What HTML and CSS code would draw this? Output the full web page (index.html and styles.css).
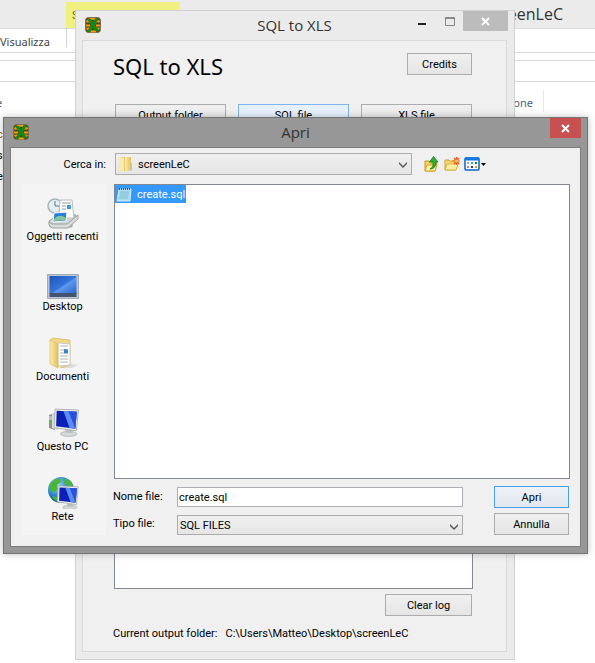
FILE: index.html
```html
<!DOCTYPE html>
<html lang="it">
<head>
<meta charset="utf-8">
<title>SQL to XLS</title>
<link rel="stylesheet" href="styles.css">
</head>
<body>
<svg class="defs" aria-hidden="true">
  <defs>
    <linearGradient id="desk" x1="0" y1="0" x2="1" y2="1"><stop offset="0" stop-color="#1f55b8"/><stop offset=".5" stop-color="#3474dc"/><stop offset=".55" stop-color="#5d98ee"/><stop offset="1" stop-color="#2863cc"/></linearGradient>
    <linearGradient id="folder" x1="0" y1="0" x2="1" y2="0"><stop offset="0" stop-color="#fbeeb0"/><stop offset="1" stop-color="#e3bf58"/></linearGradient>
    <radialGradient id="globe" cx=".35" cy=".3" r=".8"><stop offset="0" stop-color="#a8dcf8"/><stop offset=".5" stop-color="#2f86d2"/><stop offset="1" stop-color="#0c3c88"/></radialGradient>
    <symbol id="app" viewBox="0 0 16 16">
      <rect x=".5" y=".5" width="15" height="15" rx="3" fill="#5a4414" stroke="#77705c"/>
      <path d="M4 2.500q4-1.500 8 0M1.500 5q2-2 4 0M10.500 5q2-2 4 0M1 8.500h4M11 8.500h4M1.500 12q2-1 4 0M10.500 12q2-1 4 0M5 14q3 1 6 0" fill="none" stroke="#f79a0c" stroke-width="2.200"/>
      <path d="M2 2h4l2 3.500L10.500 1H14l-4 7 4.500 6H10L8 10.500 5.500 15H2l4-7z" fill="#128a16"/>
    </symbol>
    <symbol id="cross" viewBox="0 0 9 9"><path d="M1 1l7 7M8 1L1 8" stroke="#fff" stroke-width="2"/></symbol>
    <symbol id="chevron" viewBox="0 0 8 6"><path d="M0 0l4 4 4-4v2L4 6 0 2z" fill="#555"/></symbol>
    <symbol id="monitor" viewBox="0 0 24 28">
      <ellipse cx="14" cy="25" rx="8" ry="2.500" fill="#d4d7d8" stroke="#a6aaab" stroke-width=".6"/>
      <path d="M11 19h6l1 5h-7z" fill="#b9bdbe"/>
      <path d="M1 1l22.500 1-2 20L0 19z" fill="#eceeea" stroke="#a5a9a6" stroke-width=".8"/>
      <path d="M2.500 2.700l19.500 1-1.500 16.300L2 17.500z" fill="#0b20b6"/>
      <path d="M9 3l13 .7-1.500 16.300-5.500-.8z" fill="#5a8df0"/>
      <path d="M14 3.300l8 .4-1.500 16.300z" fill="#2850dc"/>
    </symbol>
  </defs>
</svg>

<div class="explorer">
  <div class="explorer-title">
    <span class="tab-tools">Strumenti</span>
    <span class="explorer-name">screenLeC</span>
  </div>
  <div class="explorer-tabs"><span>Visualizza</span></div>
  <div class="explorer-gap"></div>
  <div class="explorer-address"></div>
  <div class="explorer-columns"><span>e</span><span class="column-end">one</span></div>
  <ul class="explorer-rows"><li class="warm">c</li><li>s</li><li>e</li></ul>
</div>

<section class="main-window">
  <header class="main-bar">
    <svg class="app-icon"><use href="#app"/></svg>
    <h2>SQL to XLS</h2>
    <div class="controls">
      <button class="control" aria-label="Minimize"><svg width="9" height="9"><path d="M0 6h8v2H0z" fill="#222"/></svg></button>
      <button class="control" aria-label="Maximize"><svg width="10" height="9"><path d="M.5 1h9v7.500h-9z" fill="none" stroke="#888"/><path d="M0 1h10" stroke="#888" stroke-width="2"/></svg></button>
      <button class="control close-idle" aria-label="Close"><svg width="9" height="9"><use href="#cross"/></svg></button>
    </div>
  </header>
  <main class="main-client">
    <div class="heading-row"><h1>SQL to XLS</h1><button class="btn credits">Credits</button></div>
    <div class="steps"><button class="btn">Output folder</button><button class="btn hot">SQL file</button><button class="btn">XLS file</button></div>
    <textarea class="log" aria-label="Log" readonly></textarea>
    <button class="btn clear">Clear log</button>
    <p class="output"><span>Current output folder:</span><span>C:\Users\Matteo\Desktop\screenLeC</span></p>
  </main>
</section>

<section class="dialog" role="dialog" aria-labelledby="dialog-title">
  <header class="dialog-bar">
    <svg class="app-icon"><use href="#app"/></svg>
    <h2 id="dialog-title">Apri</h2>
    <button class="dialog-close" aria-label="Chiudi"><svg width="9" height="9"><use href="#cross"/></svg></button>
  </header>
  <form class="dialog-client">
    <div class="look-row">
      <label for="look">Cerca in:</label>
      <div class="combo with-icon">
        <select id="look"><option>screenLeC</option></select>
        <svg class="combo-icon" viewBox="0 0 14 16"><path d="M0 1h7v14H0z" fill="#e7c96a"/><path d="M0 1l5 1v14l-5-1z" fill="#f9eaa8"/><path d="M6 1h6v13l-6 2z" fill="url(#folder)"/><path d="M12 7h1v7l-2 1z" fill="#b9c9bd"/></svg>
        <svg class="arrow"><use href="#chevron"/></svg>
      </div>
      <div class="tools">
        <button type="button" aria-label="Livello superiore"><svg width="16" height="16" viewBox="0 0 16 16"><path d="M1 5h4l1 2h7l-2 8H1z" fill="#f5d768" stroke="#c79a1c"/><path d="M3 9h10l-2 6H1z" fill="#fdf0a0" stroke="#d1a52a"/><path d="M6 13q4-2 3-7H5.500L9.500 .5 14 6h-2q0 7-6 7z" fill="#2fb52f" stroke="#17741c" stroke-width=".8"/></svg></button>
        <button type="button" aria-label="Nuova cartella"><svg width="16" height="16" viewBox="0 0 16 16"><path d="M1 4h4l1 1h6v9H1z" fill="#f5d768" stroke="#cda33b"/><path d="M3 8h11l-2 6H1z" fill="#fdeea0" stroke="#d9b140"/><path d="M12.500 1v8M8.500 5h8M10 2l5 6M15 2l-5 6" stroke="#f4511c" stroke-width="1.200"/><circle cx="12.500" cy="5" r="1.500" fill="#ffc83d"/></svg></button>
        <button type="button" class="views" aria-label="Visualizza"><svg width="23" height="16" viewBox="0 0 23 16"><rect x="1" y="2" width="14" height="12" rx="1" fill="#fff" stroke="#0b63c9" stroke-width="1.500"/><path d="M1 3h14" stroke="#1676e2" stroke-width="3"/><path d="M3 6h2v2H3z" fill="#a9a5bd"/><path d="M7 6h2v2H7z" fill="#35aee6"/><path d="M11 6h2v2h-2z" fill="#178a24"/><path d="M3 10h2v2H3z" fill="#f07a55"/><path d="M7 10h2v2H7z" fill="#123a9c"/><path d="M11 10h2v2h-2z" fill="#c9a414"/><path d="M17 7h5l-2.500 3z" fill="#000"/></svg></button>
      </div>
    </div>
    <div class="dialog-body">
      <nav class="places">
        <a href="#recenti"><svg viewBox="0 0 32 32"><path d="M2 24l9-6h18l-4 8v4H3z" fill="#d3d6d8" stroke="#9b9fa1"/><circle cx="8" cy="9" r="7" fill="#e4eef2" stroke="#a5b4ba" stroke-width="1.500"/><path d="M8 4v5h5" fill="none" stroke="#60747d"/><path d="M13 3h12l2 18H12z" fill="#fff" stroke="#b8bcbe"/><path d="M15 6h9M15 9h4M15 12h4" stroke="#8ca2ac"/><path d="M20 8h4v4h-4z" fill="#3d9bd8"/><path d="M7 16l13-1-1 9-13 1z" fill="#267fd8" stroke="#fff"/><path d="M7 22q5-6 12-1l-.5 2L7 24z" fill="#85c6a0"/><path d="M2 25l3 2h15l11-9v4l-10 9H5l-3-3z" fill="#d9dbdb" stroke="#8f9496" stroke-width=".8"/></svg><span>Oggetti recenti</span></a>
        <a href="#desktop"><svg viewBox="0 0 32 32"><path d="M.5 7.500h31v24H.5z" fill="#c0c6d3" stroke="#949cac" stroke-width=".8"/><path d="M2.500 9h27v18h-27z" fill="url(#desk)"/><path d="M2.500 26h27v4h-27z" fill="#44546d"/></svg><span>Desktop</span></a>
        <a href="#documenti"><svg viewBox="0 0 32 32"><path d="M24 27l7 1-6 3H14z" fill="#ddd"/><path d="M3 3l3-2 17 2v25l-9 3z" fill="#f1d888" stroke="#d8b860" stroke-width=".7"/><path d="M11 6l12 1v21l-12 1z" fill="#fff" stroke="#bbb" stroke-width=".7"/><path d="M13 9h8M13 13h4M13 16h4M13 19h8M13 22h8M13 25h8" stroke="#a6b5bd"/><path d="M17 12l4 .5v4h-4z" fill="#3386c5"/><path d="M3 3l8 4v24l-8-4z" fill="url(#folder)" stroke="#d9bd68" stroke-width=".7"/></svg><span>Documenti</span></a>
        <a href="#pc"><svg viewBox="0 0 32 32"><path d="M2 8l6-2v17l-6-2z" fill="#8d9293"/><path d="M5 7l6-1v17l-6-2z" fill="#d7dada"/><path d="M2 10h3M2 12h3" stroke="#e8e8e8"/><circle cx="3.500" cy="15" r="1.300" fill="#45c72c"/><use href="#monitor" x="7" y="1" width="25" height="29"/></svg><span>Questo PC</span></a>
        <a href="#rete"><svg viewBox="0 0 32 32"><circle cx="14" cy="13" r="13" fill="url(#globe)"/><path d="M3 7q5-6 10-6l1 4-4 3 1 4-5 4-3-3zM18 1q6 2 8 8l-4 1-5-4zM5 19l6 1 3 5q-6 0-9-6z" fill="#48b53b"/><use href="#monitor" x="10" y="8" width="22" height="25"/></svg><span>Rete</span></a>
      </nav>
      <div class="pane">
        <ul class="files">
          <li class="file"><svg viewBox="0 0 16 16"><path d="M3 2h12l-1 12H1z" fill="#a8dcea" stroke="#e4f6fa" stroke-width=".8"/><path d="M4 5h9M4 7h9M4 9h8M3 11h9" stroke="#6cb6cd" stroke-width=".7"/><path d="M3.500 1v2M5.500 1v2M7.500 1v2M9.500 1v2M11.500 1v2M13.500 1v2" stroke="#40535b"/></svg><span>create.sql</span></li>
        </ul>
        <div class="fields">
          <label for="name">Nome file:</label>
          <input id="name" type="text" value="create.sql">
          <button type="button" class="btn default">Apri</button>
          <label for="type">Tipo file:</label>
          <div class="combo"><select id="type"><option>SQL FILES</option></select><svg class="arrow"><use href="#chevron"/></svg></div>
          <button type="button" class="btn">Annulla</button>
        </div>
      </div>
    </div>
  </form>
</section>
</body>
</html>
```

FILE: styles.css
```css
* { box-sizing: border-box; }
body {
  margin: 0;
  min-height: 100vh;
  position: relative;
  overflow: hidden;
  background: #fff;
  color: #000;
  font: 11px/16px Roboto, "Liberation Sans", sans-serif;
}
h1, h2, p, ul { margin: 0; padding: 0; font-weight: 400; list-style: none; }
button, input, select, textarea { font: inherit; color: inherit; margin: 0; }
button { border: 0; padding: 0; background: none; }
svg { display: block; flex: none; }
.defs { position: absolute; width: 0; height: 0; }

/* Explorer window in the background */
.explorer-title {
  display: flex;
  justify-content: space-between;
  height: 29px;
  padding: 2px 32px 0 66px;
  background: #ebebeb;
  border-bottom: 1px solid #d9d9d9;
}
.tab-tools { width: 114px; height: 26px; padding: 6px; background: #f0f080; color: #6b6b20; }
.explorer-name { font: 16px/24px "Open Sans", sans-serif; color: #333; }
.explorer-tabs {
  height: 24px;
  border-bottom: 1px solid #d9d9d9;
  color: #444;
  font-family: "Noto Sans", sans-serif;
  line-height: 26px;
}
.explorer-tabs span { display: block; width: 67px; height: 18px; border-right: 1px solid #d4d4d4; }
.explorer-gap { height: 8px; border-bottom: 1px solid #d9d9d9; }
.explorer-address { height: 21px; border-bottom: 1px solid #d9d9d9; }
.explorer-columns {
  display: flex;
  justify-content: space-between;
  padding: 8px 51px 0 0;
  margin-left: -4px;
  color: #4c607a;
  font-family: "Noto Sans", sans-serif;
  line-height: 26px;
}
.column-end { padding-right: 10px; border-right: 1px solid #dce9f7; height: 22px; }
.explorer-rows { margin: 8px 0 0 -3px; line-height: 21px; }
.warm { color: #a50; }

/* Converter window */
.main-window {
  position: absolute;
  top: 10px;
  left: 75px;
  right: 80px;
  padding: 0 7px 7px 6px;
  background: #ebebeb;
  border: 1px solid #d0d0d0;
}
.main-bar, .dialog-bar { display: grid; grid-template-columns: 1fr auto 1fr; height: 29px; }
.app-icon { width: 16px; height: 16px; margin: 6px 0 0 3px; }
.main-bar h2, .dialog-bar h2 { font: 15px/28px "Open Sans", sans-serif; color: #333; }
.controls { display: flex; justify-content: flex-end; margin-right: -1px; }
.control { display: flex; align-items: center; justify-content: center; width: 27px; height: 20px; }
.control.close-idle { width: 45px; background: #bcbcbc; }
.main-client {
  display: flex;
  flex-direction: column;
  padding: 12px 34px 9px 30px;
  background: #f0f0f0;
  border: 1px solid #dadada;
}
.btn {
  height: 22px;
  padding-top: 1px;
  border: 1px solid #acacac;
  background: linear-gradient(#f0f0f0, #e5e5e5);
  text-align: center;
}
.btn.hot { border-color: #7eb4ea; background: #e5f1fc; }
.btn.default { border-color: #4c9ff0; background: linear-gradient(#ecf2f8, #e3e8ee); }
.heading-row { display: flex; justify-content: space-between; align-items: flex-start; }
h1 { font: 22px/26px "Noto Sans", sans-serif; }
.credits { width: 65px; }
.steps { display: grid; grid-template-columns: repeat(3, 1fr); gap: 12px; margin: 25px 0 12px 2px; }
.log {
  height: 451px;
  margin: 0 -1px 0 1px;
  resize: none;
  background: #fff;
  border: 1px solid #828790;
  border-radius: 0;
}
.clear { width: 87px; align-self: flex-end; margin: 5px 0 10px; }
.output { display: flex; gap: 8px; white-space: nowrap; }

/* Open dialog */
.dialog {
  position: absolute;
  top: 117px;
  left: 3px;
  right: 7px;
  padding: 0 6px 6px;
  background: #979797;
  border: 1px solid #747474;
  box-shadow: 0 0 7px rgba(0, 0, 0, .25);
}
.dialog-close { display: flex; align-items: center; justify-content: center; justify-self: end; width: 31px; height: 20px; background: #c75050; }
.dialog-client { padding: 5px 10px 11px; background: #f0f0f0; border: 1px solid #7c7c7c; }
.look-row { display: grid; grid-template-columns: 85px 1fr 149px; column-gap: 9px; align-items: center; height: 22px; }
.look-row label { justify-self: end; padding-top: 2px; }
.combo { position: relative; height: 22px; }
.combo select {
  appearance: none;
  display: block;
  width: 100%;
  height: 100%;
  padding: 1px 20px 0 2px;
  border: 1px solid #acacac;
  border-radius: 0;
  background: linear-gradient(#f0f0f0, #e5e5e5);
}
.combo.with-icon select { padding-left: 22px; }
.combo-icon { position: absolute; left: 4px; top: 3px; width: 14px; height: 16px; }
.arrow { position: absolute; right: 5px; top: 9px; width: 8px; height: 6px; pointer-events: none; }
.tools { display: flex; gap: 4px; padding-left: 3px; }
.dialog-body { display: grid; grid-template-columns: 85px 1fr; column-gap: 8px; margin-top: 9px; }
.places { display: flex; flex-direction: column; gap: 22px; padding: 13px 2px 10px 0; background: #f4f4f4; }
.places a { display: flex; flex-direction: column; align-items: center; color: inherit; text-decoration: none; white-space: nowrap; }
.places svg { width: 32px; height: 32px; }
.pane { display: flex; flex-direction: column; }
.files { height: 295px; background: #fff; border: 1px solid #828790; }
.file {
  display: flex;
  align-items: center;
  gap: 5px;
  width: max-content;
  height: 18px;
  padding: 1px 1px 0;
  background: #3399ff;
  color: #fff;
  outline: 1px dotted #c87838;
  outline-offset: -1px;
}
.file svg { width: 16px; height: 16px; }
.fields { display: grid; grid-template-columns: 55px 1fr 75px; column-gap: 8px; row-gap: 5px; padding: 7px 1px 0 0; }
.fields label { padding-top: 3px; margin-left: -1px; white-space: nowrap; }
.fields .combo, .fields input { height: 20px; margin-right: 23px; }
.fields input { width: auto; min-width: 0; margin-top: 1px; padding: 0 1px; border: 1px solid #abadb3; background: #fff; }
.fields .combo { margin-top: 2px; }
```
